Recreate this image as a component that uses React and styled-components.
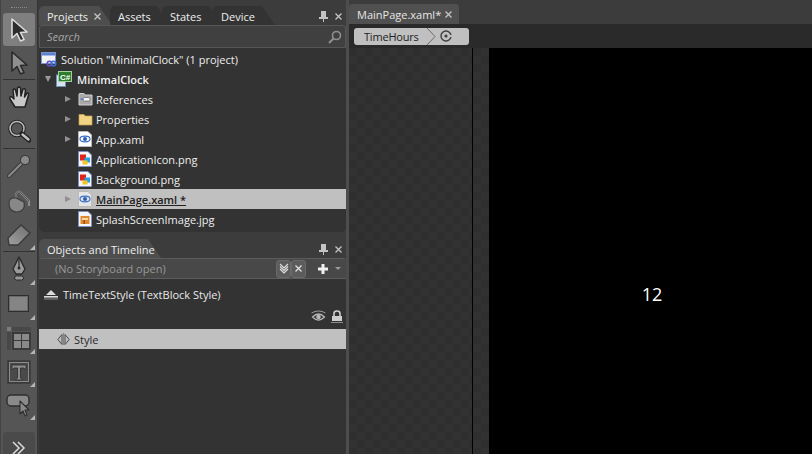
import React from 'react';
import styled, { createGlobalStyle } from 'styled-components';

const GlobalStyle = createGlobalStyle`
  html, body, #root {
    margin: 0;
    padding: 0;
    width: 100%;
    height: 100%;
    overflow: hidden;
    background: #3c3c3c;
  }
  * { box-sizing: border-box; }
`;

const Shell = styled.div`
  display: flex;
  width: 812px;
  height: 454px;
  font-family: "Open Sans", "Noto Sans", "Liberation Sans", sans-serif;
  font-size: 11px;
  color: #e8e8e8;
  background: #3c3c3c;
  overflow: hidden;
`;

/* left tools */
const Toolbar = styled.div`
  width: 38px;
  flex: none;
  display: flex;
  flex-direction: column;
  background: #555555;
  border-left: 1px solid #444444;
  border-right: 1px solid #343434;
`;

const Grip = styled.div`
  height: 6px;
  flex: none;
  margin: 7px 10px 0;
  border-top: 1px dotted #8a8a8a;
`;

const Tool = styled.div`
  position: relative;
  height: ${p => p.$h || 33}px;
  flex: none;
  margin: 0 2px;
  display: flex;
  align-items: center;
  justify-content: center;
  border-radius: 3px;
  background: ${p => (p.$active ? '#7f7f7f' : 'transparent')};
  &::after {
    content: '';
    display: ${p => (p.$more ? 'block' : 'none')};
    position: absolute;
    right: 0;
    bottom: 1px;
    border-style: solid;
    border-width: 0 0 5px 5px;
    border-color: transparent transparent #b5b5b5 transparent;
  }
`;

const ToolSep = styled.div`
  height: 1px;
  flex: none;
  margin: 0 2px;
  background: #333333;
`;

const BottomTool = styled.div`
  margin: auto 2px 0;
  height: 22px;
  flex: none;
  display: flex;
  justify-content: center;
  padding-top: 8px;
  background: #4a4a4a;
  border-radius: 3px 3px 0 0;
`;

/* docked panels */
const Dock = styled.div`
  width: 311px;
  flex: none;
  display: flex;
  flex-direction: column;
  padding-left: 1px;
  border-right: 3px solid #4d4d4d;
`;

const TabStrip = styled.div`
  height: ${p => p.$h}px;
  flex: none;
  display: flex;
  align-items: flex-end;
`;

const PanelTab = styled.div`
  height: ${p => p.$h || 19}px;
  display: flex;
  align-items: center;
  gap: 6px;
  width: ${p => p.$w}px;
  margin-left: ${p => p.$ml || 0}px;
  padding: 1px 0 0 8px;
  flex: none;
  border-radius: 5px 0 0 0;
  clip-path: polygon(0 0, calc(100% - 13px) 0, 100% 100%, 0 100%);
  background: ${p => (p.$active ? '#4e4e4e' : '#333333')};
  color: #eeeeee;
  font-size: 11px;
`;

const StripActions = styled.div`
  margin-left: auto;
  display: flex;
  align-items: center;
  gap: 7px;
  height: 17px;
  padding-right: 4px;
  color: #c4c4c4;
`;

const SearchBar = styled.div`
  height: 23px;
  flex: none;
  display: flex;
  align-items: center;
  justify-content: space-between;
  padding: 0 3px 0 7px;
  background: #404040;
  border: 1px solid #565656;
  border-radius: 3px 3px 0 0;
  color: #a6a6a6;
  font-style: italic;
  font-size: 11px;
`;

const Tree = styled.div`
  height: 184px;
  flex: none;
  padding-top: 1px;
  background: #333333;
  border-radius: 0 0 5px 5px;
`;

const Row = styled.div`
  height: 20px;
  display: flex;
  align-items: center;
  padding-left: ${p => p.$indent}px;
  background: ${p => (p.$selected ? '#c0c0c0' : 'transparent')};
  color: ${p => (p.$selected ? '#222222' : '#eeeeee')};
  font-weight: ${p => (p.$bold ? 600 : 400)};
`;

const Arrow = styled.span`
  width: 0;
  height: 0;
  flex: none;
  margin-right: ${p => p.$gap}px;
  border-style: solid;
  ${p => p.$open
    ? 'border-width: 6px 3.5px 0 3.5px; border-color: #9a9a9a transparent transparent transparent;'
    : 'border-width: 3.5px 0 3.5px 6px; border-color: transparent transparent transparent #8f8f8f;'}
`;

const RowIcon = styled.span`
  width: 16px;
  height: 16px;
  flex: none;
  margin-right: ${p => p.$gap || 3}px;
  display: flex;
  align-items: center;
  justify-content: center;
`;

const SelectedName = styled.span`
  font-weight: 600;
  text-decoration: underline;
`;

const PanelGap = styled.div`
  height: 7px;
  flex: none;
`;

const StoryboardBar = styled.div`
  height: 21px;
  flex: none;
  display: flex;
  align-items: center;
  padding-left: 16px;
  background: #484848;
  border-top: 1px solid #5c5c5c;
  border-bottom: 1px solid #5c5c5c;
  border-radius: 3px 3px 0 0;
  color: #989898;
`;

const StoryboardActions = styled.div`
  margin-left: auto;
  display: flex;
  align-items: center;
  height: 100%;
  padding-right: 5px;
`;

const MiniButton = styled.span`
  width: 15px;
  height: 18px;
  display: flex;
  align-items: center;
  justify-content: center;
  background: #5c5c5c;
  border: 1px solid #6a6a6a;
  border-radius: 3px;
`;

const AddGroup = styled.span`
  display: flex;
  align-items: center;
  gap: 7px;
  margin-left: 12px;
`;

const Caret = styled.span`
  width: 0;
  height: 0;
  border-style: solid;
  border-width: 3px 3px 0 3px;
  border-color: #9a9a9a transparent transparent transparent;
`;

const Timeline = styled.div`
  flex: 1;
  background: #333333;
`;

const StyleScope = styled.div`
  height: 30px;
  display: flex;
  align-items: center;
  gap: 5px;
  padding: 1px 0 0 5px;
`;

const VisibilityRow = styled.div`
  height: 19px;
  display: flex;
  align-items: center;
  justify-content: flex-end;
  gap: 5px;
  padding: 0 3px 4px 0;
`;

const TimelineItem = styled.div`
  height: 20px;
  margin-top: 1px;
  display: flex;
  align-items: center;
  gap: 4px;
  padding-left: 18px;
  background: #c0c0c0;
  color: #2a2a2a;
`;

/* document area */
const Editor = styled.div`
  flex: 1;
  display: flex;
  flex-direction: column;
  min-width: 0;
`;

const DocTabs = styled.div`
  height: 24px;
  flex: none;
  display: flex;
  align-items: flex-end;
  background: #3c3c3c;
`;

const DocTab = styled.div`
  width: 110px;
  height: 20px;
  display: flex;
  align-items: center;
  gap: 4px;
  padding-left: 8px;
  background: #505050;
  border-radius: 4px 4px 0 0;
  color: #e6e6e6;
`;

const CrumbBar = styled.div`
  height: 24px;
  flex: none;
  display: flex;
  align-items: center;
  padding-left: 5px;
  background: #2a2a2a;
`;

const Crumb = styled.div`
  width: 115px;
  height: 17px;
  display: flex;
  align-items: center;
  background: #c0c0c0;
  border-radius: 3px;
  color: #222222;
  padding-left: 10px;
  letter-spacing: -0.2px;
  position: relative;
`;

const CrumbIcon = styled.span`
  position: absolute;
  left: 73px;
  top: 0;
  height: 17px;
`;

const Stage = styled.div`
  flex: 1;
  display: flex;
  min-height: 0;
`;

const Pasteboard = styled.div`
  flex: none;
  width: ${p => p.$w}px;
  background: repeating-conic-gradient(#323232 0 25%, #2f2f2f 0 50%) 0 0 / 16px 16px;
`;

const ArtboardEdge = styled.div`
  width: 1px;
  flex: none;
  background: #000000;
`;

const Artboard = styled.div`
  flex: 1;
  display: flex;
  justify-content: center;
  padding: 234px 0 0 3px;
  background: #000000;
  color: #ffffff;
  font-size: 18px;
  line-height: 24px;
`;

/* drawings */
const Cursor = ({ fill = '#8f8f8f', stroke = '#2a2a2a', size = 24 }) => (
  <svg width={size} height={size} viewBox="0 0 24 24">
    <path d="M5 1 L5 20 L10 15.5 L13.5 23 L17 21.5 L13.5 14.5 L20 14 Z" fill={fill} stroke={stroke} strokeWidth="1.6" strokeLinejoin="round" />
  </svg>
);

const HandIcon = () => (
  <svg width="24" height="24" viewBox="0 0 24 24">
    <path d="M8 22 L3 14 Q2 11 5 12 L7 14 L6 5 Q7 3 8.5 5 L10 11 L10.5 3 Q12 1 13.5 3 L14 11 L16 4 Q17.5 3 18.5 5 L17.5 12 L20 8 Q22 8 21.5 10 L18 22 Z" fill="#c9c9c9" stroke="#222" strokeWidth="1.5" strokeLinejoin="round" />
  </svg>
);

const ZoomIcon = () => (
  <svg width="24" height="24" viewBox="0 0 24 24" fill="none">
    <circle cx="10" cy="9.5" r="7" stroke="#222" strokeWidth="3.5" />
    <circle cx="10" cy="9.5" r="7" stroke="#b8b8b8" strokeWidth="1.6" />
    <path d="M15 15 L22 21" stroke="#222" strokeWidth="5" strokeLinecap="round" />
    <path d="M15.5 15.5 L21.5 20.5" stroke="#c4c4c4" strokeWidth="2.4" strokeLinecap="round" />
  </svg>
);

const DropperIcon = () => (
  <svg width="24" height="24" viewBox="0 0 24 24" fill="none">
    <path d="M2 22 L15 9" stroke="#3e3e3e" strokeWidth="4.5" strokeLinecap="round" />
    <path d="M2 22 L15 9" stroke="#8a8a8a" strokeWidth="2" strokeLinecap="round" />
    <circle cx="18" cy="6" r="4.6" fill="#8a8a8a" stroke="#3e3e3e" strokeWidth="1.2" />
  </svg>
);

const BucketIcon = () => (
  <svg width="24" height="24" viewBox="0 0 24 24" fill="none">
    <path d="M9 9 L9 5 Q11 1 14 4 L22 12 L22 17" stroke="#8a8a8a" strokeWidth="2.2" />
    <path d="M9 9 L9 5 Q11 1 14 4 L22 12" stroke="#3e3e3e" strokeWidth="0.7" />
    <path d="M2 14 Q2 8 9 9 L17 13 Q19 22 10 23 Q2 23 2 14 Z" fill="#888888" stroke="#3e3e3e" strokeWidth="1.2" />
  </svg>
);

const EraserIcon = () => (
  <svg width="24" height="24" viewBox="0 0 24 24">
    <defs>
      <linearGradient id="eraserFill" x1="0" y1="1" x2="1" y2="0">
        <stop offset="0" stopColor="#a0a0a0" />
        <stop offset="1" stopColor="#6e6e6e" />
      </linearGradient>
    </defs>
    <path d="M1 15 L14 2 L23 10 L11 22 L2 22 Z" fill="url(#eraserFill)" stroke="#3a3a3a" strokeWidth="1.4" strokeLinejoin="round" />
  </svg>
);

const PenIcon = () => (
  <svg width="24" height="26" viewBox="0 0 24 26">
    <path d="M12 1 L18 13 L15 18 L9 18 L6 13 Z" fill="#9a9a9a" stroke="#2a2a2a" strokeWidth="1.4" strokeLinejoin="round" />
    <path d="M12 3 L12 11" stroke="#2a2a2a" strokeWidth="1.2" />
    <circle cx="12" cy="12" r="1.5" fill="#2a2a2a" />
    <rect x="7.5" y="20" width="9" height="4" rx="2" fill="#9a9a9a" stroke="#2a2a2a" />
  </svg>
);

const RectIcon = () => (
  <svg width="24" height="24" viewBox="0 0 24 24">
    <rect x="1" y="3" width="21" height="17" fill="#2e2e2e" />
    <rect x="2.5" y="4.5" width="18" height="14" fill="#858585" stroke="#6a6a6a" />
  </svg>
);

const GridIcon = () => (
  <svg width="24" height="24" viewBox="0 0 24 24">
    <rect x="0" y="1" width="4" height="4" fill="#7c7c7c" />
    <rect x="5" y="1" width="19" height="4" fill="#484848" />
    <rect x="0" y="6" width="4" height="18" fill="#484848" />
    <rect x="5" y="6" width="19" height="18" fill="#3a3a3a" />
    <rect x="7" y="8" width="7" height="6" fill="#8a8a8a" />
    <rect x="15" y="8" width="7" height="6" fill="#8a8a8a" />
    <rect x="7" y="15" width="7" height="7" fill="#8a8a8a" />
    <rect x="15" y="15" width="7" height="7" fill="#8a8a8a" />
  </svg>
);

const TextToolIcon = () => (
  <svg width="24" height="24" viewBox="0 0 24 24">
    <rect x="1" y="1" width="22" height="22" fill="#4a4a4a" stroke="#2c2c2c" />
    <rect x="2.5" y="2.5" width="19" height="19" fill="none" stroke="#8a8a8a" />
    <path d="M5 5 H19 V10 L17 8 H13.5 V18 L15.5 20 H8.5 L10.5 18 V8 H7 L5 10 Z" fill="#8c8c8c" stroke="#2c2c2c" strokeWidth="0.8" />
  </svg>
);

const CalloutIcon = () => (
  <svg width="26" height="26" viewBox="0 0 26 26">
    <rect x="1" y="3" width="22" height="11" rx="4" fill="#8a8a8a" stroke="#2e2e2e" strokeWidth="1.4" />
    <path d="M14 9 L14 22 L17 19 L19 24 L21 23 L19 18 L23 18 Z" fill="#8a8a8a" stroke="#2e2e2e" strokeWidth="1.1" strokeLinejoin="round" />
  </svg>
);

const DoubleChevron = () => (
  <svg width="16" height="16" viewBox="0 0 16 16" fill="none" stroke="#d8d8d8" strokeWidth="1.5">
    <path d="M2 2 L8 8 L2 14" />
    <path d="M7 2 L13 8 L7 14" />
  </svg>
);

const PinIcon = () => (
  <svg width="9" height="11" viewBox="0 0 9 11" fill="#c4c4c4">
    <rect x="2" y="0" width="5" height="6" />
    <rect x="0" y="6" width="9" height="2" />
    <rect x="4" y="8" width="1" height="3" />
  </svg>
);

const CloseIcon = ({ color = '#c4c4c4' }) => (
  <svg width="7" height="7" viewBox="0 0 7 7" stroke={color} strokeWidth="1.3">
    <path d="M0.5 0.5 L6.5 6.5 M6.5 0.5 L0.5 6.5" />
  </svg>
);

const SearchIcon = () => (
  <svg width="14" height="14" viewBox="0 0 14 14" fill="none" stroke="#8f8f8f" strokeWidth="1.6">
    <circle cx="8.5" cy="5.5" r="4" />
    <path d="M5.5 8.5 L1 13" strokeWidth="2" />
  </svg>
);

const SolutionIcon = () => (
  <svg width="16" height="16" viewBox="0 0 16 16">
    <rect x="0.5" y="1.5" width="14" height="11" fill="#f2f2f2" stroke="#7d93c9" />
    <rect x="1" y="2" width="13" height="2.5" fill="#5b82d6" />
    <circle cx="8.5" cy="12.5" r="2.3" fill="none" stroke="#6a4bc4" strokeWidth="1.6" />
    <circle cx="12.5" cy="12.5" r="2.3" fill="none" stroke="#3f6fd6" strokeWidth="1.6" />
  </svg>
);

const CsProjectIcon = () => (
  <svg width="16" height="16" viewBox="0 0 16 16">
    <rect x="0.5" y="4" width="9" height="11.5" fill="#d7e2ee" stroke="#6f8fb5" />
    <rect x="2.5" y="0.5" width="13" height="10" fill="#2d7d2d" stroke="#9ed19e" />
    <text x="4" y="8.5" fontSize="8" fontWeight="700" fontFamily="Liberation Sans, sans-serif" fill="#ffffff">C#</text>
  </svg>
);

const ReferencesIcon = () => (
  <svg width="15" height="14" viewBox="0 0 15 14">
    <path d="M1 2.5 Q1 1.5 2 1.5 H6 L7 3 H14 V13 H1 Z" fill="#a9a9a9" stroke="#d0d0d0" />
    <rect x="5" y="5.5" width="7" height="3.5" rx="1.5" fill="#f4f4f4" stroke="#555" strokeWidth="0.6" />
    <rect x="2.5" y="6.5" width="3" height="1.4" fill="#4f78c4" />
  </svg>
);

const FolderIcon = () => (
  <svg width="15" height="14" viewBox="0 0 15 14">
    <path d="M1 2.5 H6 L7 4 H14 V13 H1 Z" fill="#f2d283" stroke="#c7a552" strokeWidth="0.7" />
  </svg>
);

const XamlIcon = ({ faded }) => (
  <svg width="14" height="16" viewBox="0 0 14 16">
    <path d="M0.5 0.5 H10 L13.5 4 V15.5 H0.5 Z" fill={faded ? '#e6e6e6' : '#ffffff'} stroke="#b9b9b9" />
    <ellipse cx="7" cy="8" rx="5" ry="2.8" fill="none" stroke="#3a73c9" strokeWidth="1.2" />
    <circle cx="7" cy="8" r="2" fill="#2a5db3" />
  </svg>
);

const ImageIcon = ({ jpg }) => (
  <svg width="14" height="16" viewBox="0 0 14 16">
    <path d="M0.5 0.5 H10 L13.5 4 V15.5 H0.5 Z" fill="#f4f6fb" stroke="#7d8fc4" />
    {jpg ? (
      <>
        <rect x="2.5" y="5" width="9" height="8" fill="#e08a2f" />
        <rect x="4" y="7" width="6" height="2" fill="#f7d9a5" />
        <rect x="5.5" y="9" width="1.5" height="4" fill="#a6461d" />
      </>
    ) : (
      <>
        <rect x="2" y="3.5" width="6" height="6" fill="#e2231a" />
        <rect x="6.5" y="6.5" width="5.5" height="5" fill="#2a9fe0" />
        <rect x="4.5" y="9.5" width="5" height="4" fill="#f2c81e" />
      </>
    )}
  </svg>
);

const ScopeUpIcon = () => (
  <svg width="14" height="10" viewBox="0 0 14 10" fill="#dcdcdc">
    <path d="M7 0 L12 5 H2 Z" />
    <rect x="0" y="6" width="14" height="1.6" />
    <rect x="0" y="8.5" width="14" height="1" fill="#8c8c8c" />
  </svg>
);

const EyeIcon = () => (
  <svg width="15" height="13" viewBox="0 0 15 13" fill="none" stroke="#b8b8b8">
    <path d="M0.5 3 Q7.5 -1 14.5 3" strokeWidth="0.8" />
    <path d="M1.5 7 Q7.5 1 13.5 7 Q7.5 13 1.5 7 Z" strokeWidth="1.2" />
    <circle cx="7.5" cy="7" r="2.3" fill="#b8b8b8" stroke="none" />
  </svg>
);

const LockIcon = () => (
  <svg width="12" height="13" viewBox="0 0 12 13">
    <path d="M3 6 V3.5 Q3 1 6 1 Q9 1 9 3.5 V6" fill="none" stroke="#cfcfcf" strokeWidth="1.6" />
    <rect x="1" y="6" width="10" height="5" fill="#cfcfcf" />
    <rect x="0" y="12" width="12" height="1" fill="#8c8c8c" />
  </svg>
);

const DiamondIcon = () => (
  <svg width="13" height="13" viewBox="0 0 13 13" fill="none" stroke="#4a4a4a">
    <path d="M5 1.5 L0.8 6.5 L5 11.5 Z" />
    <path d="M8 1.5 L12.2 6.5 L8 11.5 Z" />
    <path d="M6.5 0.5 V12.5" strokeDasharray="1 1" />
  </svg>
);

const ChevronDownIcon = () => (
  <svg width="10" height="11" viewBox="0 0 10 11" fill="none" stroke="#e0e0e0" strokeWidth="1.1">
    <path d="M1 1 L5 5 L9 1 M1 3.5 L5 7.5 L9 3.5 M1 6 L5 10 L9 6" />
  </svg>
);

const PlusIcon = () => (
  <svg width="10" height="10" viewBox="0 0 10 10" fill="#f0f0f0">
    <rect x="3.5" y="0" width="3" height="10" />
    <rect x="0" y="3.5" width="10" height="3" />
  </svg>
);

const CrumbGlyph = () => (
  <svg width="32" height="17" viewBox="0 0 32 17" fill="none">
    <path d="M0 0 L8 8.5 L0 17" stroke="#6a6a6a" strokeWidth="1" />
    <circle cx="19" cy="8" r="5" stroke="#3e3e3e" strokeWidth="1.4" />
    <circle cx="19" cy="8" r="1.6" fill="#3e3e3e" />
    <path d="M23 8 H25" stroke="#c0c0c0" strokeWidth="2" />
  </svg>
);

const tools = [
  { icon: <Cursor fill="#2e2e2e" stroke="#dcdcdc" />, active: true, h: 33 },
  { icon: <Cursor />, h: 33, sep: true },
  { icon: <HandIcon />, h: 34 },
  { icon: <ZoomIcon />, h: 34, sep: true },
  { icon: <DropperIcon />, h: 34 },
  { icon: <BucketIcon />, h: 35 },
  { icon: <EraserIcon />, h: 33, more: true, sep: true },
  { icon: <PenIcon />, h: 34, more: true },
  { icon: <RectIcon />, h: 35, more: true },
  { icon: <GridIcon />, h: 34, more: true },
  { icon: <TextToolIcon />, h: 33, more: true },
  { icon: <CalloutIcon />, h: 33, more: true },
];

const files = [
  { name: 'References', icon: <ReferencesIcon />, arrow: true },
  { name: 'Properties', icon: <FolderIcon />, arrow: true },
  { name: 'App.xaml', icon: <XamlIcon />, arrow: true },
  { name: 'ApplicationIcon.png', icon: <ImageIcon /> },
  { name: 'Background.png', icon: <ImageIcon /> },
  { name: 'MainPage.xaml *', icon: <XamlIcon faded />, arrow: true, selected: true },
  { name: 'SplashScreenImage.jpg', icon: <ImageIcon jpg /> },
];

export default function App() {
  return (
    <Shell>
      <GlobalStyle />
      <Toolbar>
        <Grip />
        {tools.map((t, i) => (
          <React.Fragment key={i}>
            <Tool $active={t.active} $h={t.h} $more={t.more}>{t.icon}</Tool>
            {t.sep && <ToolSep />}
          </React.Fragment>
        ))}
        <BottomTool><DoubleChevron /></BottomTool>
      </Toolbar>

      <Dock>
        <TabStrip $h={25}>
          <PanelTab $active $w={73}>Projects <CloseIcon /></PanelTab>
          <PanelTab $w={60} $ml={-2}>Assets</PanelTab>
          <PanelTab $w={60} $ml={-8}>States</PanelTab>
          <PanelTab $w={62} $ml={-9}>Device</PanelTab>
          <StripActions><PinIcon /><CloseIcon /></StripActions>
        </TabStrip>
        <SearchBar>Search<SearchIcon /></SearchBar>
        <Tree>
          <Row $indent={2}>
            <RowIcon $gap={4}><SolutionIcon /></RowIcon>
            Solution "MinimalClock" (1 project)
          </Row>
          <Row $indent={6} $bold>
            <Arrow $open $gap={5} />
            <RowIcon $gap={5}><CsProjectIcon /></RowIcon>
            MinimalClock
          </Row>
          {files.map(f => (
            <Row key={f.name} $indent={f.arrow ? 26 : 38} $selected={f.selected}>
              {f.arrow && <Arrow $gap={6} />}
              <RowIcon>{f.icon}</RowIcon>
              {f.selected ? <SelectedName>{f.name}</SelectedName> : f.name}
            </Row>
          ))}
        </Tree>

        <PanelGap />
        <TabStrip $h={19}>
          <PanelTab $active $h={19} $w={122}>Objects and Timeline</PanelTab>
          <StripActions><PinIcon /><CloseIcon /></StripActions>
        </TabStrip>
        <StoryboardBar>
          (No Storyboard open)
          <StoryboardActions>
            <MiniButton><ChevronDownIcon /></MiniButton>
            <MiniButton><CloseIcon color="#e0e0e0" /></MiniButton>
            <AddGroup><PlusIcon /><Caret /></AddGroup>
          </StoryboardActions>
        </StoryboardBar>
        <Timeline>
          <StyleScope><ScopeUpIcon /> TimeTextStyle (TextBlock Style)</StyleScope>
          <VisibilityRow><EyeIcon /><LockIcon /></VisibilityRow>
          <TimelineItem><DiamondIcon />Style</TimelineItem>
        </Timeline>
      </Dock>

      <Editor>
        <DocTabs>
          <DocTab>MainPage.xaml* <CloseIcon /></DocTab>
        </DocTabs>
        <CrumbBar>
          <Crumb>
            TimeHours
            <CrumbIcon><CrumbGlyph /></CrumbIcon>
          </Crumb>
        </CrumbBar>
        <Stage>
          <Pasteboard $w={123} />
          <ArtboardEdge />
          <Pasteboard $w={16} />
          <Artboard>12</Artboard>
        </Stage>
      </Editor>
    </Shell>
  );
}
